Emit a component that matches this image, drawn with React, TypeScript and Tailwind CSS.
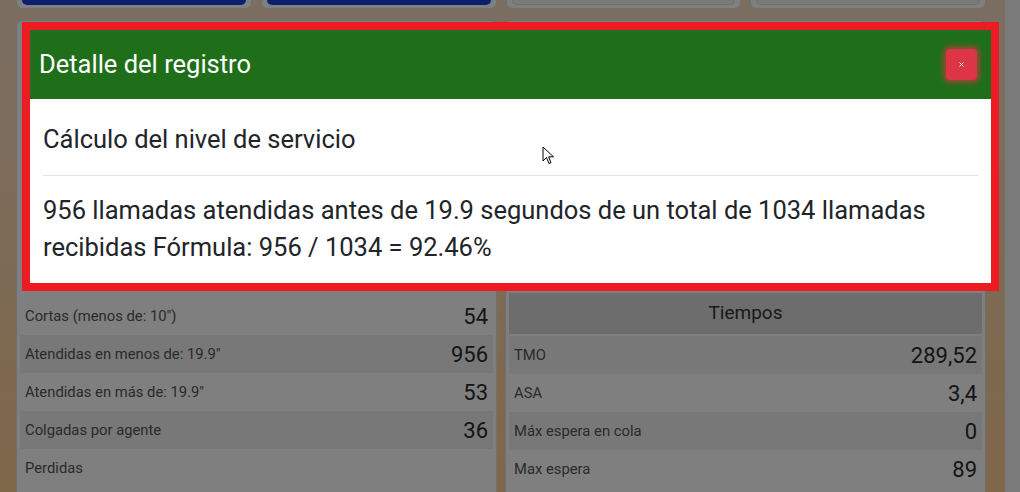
import { X } from 'lucide-react';

const llamadas = [
  { label: 'Cortas (menos de: 10")', value: '54' },
  { label: 'Atendidas en menos de: 19.9"', value: '956' },
  { label: 'Atendidas en más de: 19.9"', value: '53' },
  { label: 'Colgadas por agente', value: '36' },
  { label: 'Perdidas', value: '' },
];

const tiempos = [
  { label: 'TMO', value: '289,52' },
  { label: 'ASA', value: '3,4' },
  { label: 'Máx espera en cola', value: '0' },
  { label: 'Max espera', value: '89' },
];

const StatRow = ({ label, value, striped }: { label: string; value: string; striped: boolean }) => (
  <div className={`h-[38px] flex items-center justify-between px-[5px] ${striped ? 'bg-[#f1f1f1]' : 'bg-white'}`}>
    <span className="text-[14.8px] text-[#555]">{label}</span>
    <span className="text-[22px] text-[#2a2a2a]">{value}</span>
  </div>
);

export default function App() {
  return (
    <div className="relative h-[492px] w-full overflow-hidden flex bg-gradient-to-b from-[#f6dcc4] to-[#ffcf94] font-['Roboto',sans-serif]">
      <div className="flex-1 pl-4 pr-[19px]">
        {/* top buttons, scrolled partly out of view */}
        <div className="grid grid-cols-4 gap-[9px]">
          <div className="h-[9px] bg-white border border-t-0 border-[#dedede] rounded-b-md px-[5px]">
            <div className="h-[5px] bg-[#163edc] rounded-b-md" />
          </div>
          <div className="h-[9px] bg-white border border-t-0 border-[#dedede] rounded-b-md px-[5px]">
            <div className="h-[5px] bg-[#163edc] rounded-b-md" />
          </div>
          <div className="h-[9px] bg-white border border-t-0 border-[#dedede] rounded-b-md px-[5px]">
            <div className="h-[5px] bg-[#f4f4f4] border border-t-0 border-[#dedede] rounded-b-md" />
          </div>
          <div className="h-[9px] bg-white border border-t-0 border-[#dedede] rounded-b-md px-[5px]">
            <div className="h-[5px] bg-[#f4f4f4] border border-t-0 border-[#dedede] rounded-b-md" />
          </div>
        </div>

        <div className="mt-[11px] grid grid-cols-2 gap-2">
          <div className="bg-white border border-[#dedede] rounded-md p-[3px] pb-[24px]">
            {/* summary block, covered by the modal */}
            <div className="h-[273px]" />
            {llamadas.map((r, i) => (
              <StatRow key={r.label} label={r.label} value={r.value} striped={i % 2 === 1} />
            ))}
          </div>
          <div className="bg-white border border-[#dedede] rounded-md p-[3px] pb-[24px]">
            <div className="h-[269px]" />
            <div className="h-[41px] bg-[#dadada] flex items-center justify-center text-[19px] text-[#333]">Tiempos</div>
            <div className="mt-[2px]">
              {tiempos.map((r, i) => (
                <StatRow key={r.label} label={r.label} value={r.value} striped={i % 2 === 0} />
              ))}
            </div>
          </div>
        </div>
      </div>
      <div className="w-[15px] bg-[#f4f4f4]" />

      {/* backdrop */}
      <div className="absolute inset-0 bg-black/50" />

      {/* modal */}
      <div className="absolute left-[22px] top-[22px] w-[977px] border-[8px] border-[#ed1c24] bg-white">
        <div className="h-[69px] bg-[#1f6f1a] flex items-center justify-between pl-[9px] pr-[14px]">
          <h4 className="text-[25.5px] text-white">Detalle del registro</h4>
          <button className="w-[31px] h-[31px] rounded bg-[#dc3545] shadow-[0_0_5px_3px_rgba(220,53,69,0.6)] flex items-center justify-center text-white">
            <X size={7} strokeWidth={3} />
          </button>
        </div>
        <div className="px-[13px] pt-[22px] pb-[17px] text-[#212529]">
          <h5 className="text-[25.5px] leading-[37.5px]">Cálculo del nivel de servicio</h5>
          <hr className="my-[16px] border-[#e3e3e3]" />
          <p className="text-[25.5px] leading-[37px]">
            956 llamadas atendidas antes de 19.9 segundos de un total de 1034 llamadas recibidas Fórmula: 956 / 1034 = 92.46%
          </p>
        </div>
      </div>

      {/* mouse pointer */}
      <svg className="absolute left-[542px] top-[146px]" width="13" height="19" viewBox="0 0 13 19">
        <path d="M1 1 L1 15 L4.5 11.5 L7 17.5 L9 16.6 L6.6 10.8 L11.5 10.8 Z" fill="white" stroke="black" strokeWidth="1" />
      </svg>
    </div>
  );
}
